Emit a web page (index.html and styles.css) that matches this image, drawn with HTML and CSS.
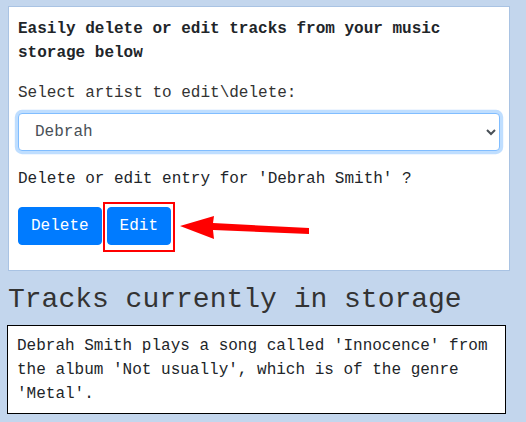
FILE: index.html
```html
<!DOCTYPE html>
<html lang="en">
<head>
<meta charset="utf-8">
<title>Music storage</title>
<link rel="stylesheet" href="styles.css">
</head>
<body>
<main class="page">
  <section class="card">
    <p class="intro">Easily delete or edit tracks from your music storage below</p>
    <div class="form-group">
      <label class="label" for="artist">Select artist to edit\delete:</label>
      <select id="artist" class="select">
        <option>Debrah</option>
      </select>
    </div>
    <p class="question">Delete or edit entry for 'Debrah Smith' ?</p>
    <div class="actions">
      <button class="btn">Delete</button>
      <button class="btn">Edit</button>
      <span class="highlight"></span>
      <svg class="arrow" width="140" height="36" viewBox="0 0 140 36" aria-hidden="true">
        <polygon points="5,16 39,6 38,13 134,18 134,24 38,20 39,29" fill="#f00"/>
      </svg>
    </div>
  </section>
  <h3 class="title">Tracks currently in storage</h3>
  <div class="tracks">
    <p class="track">Debrah Smith plays a song called 'Innocence' from the album 'Not usually', which is of the genre 'Metal'.</p>
  </div>
</main>
</body>
</html>
```

FILE: styles.css
```css
* { box-sizing: border-box; }

html, body {
  margin: 0;
  padding: 0;
  background: #c3d6ed;
}

body {
  font-family: "Liberation Mono", "Courier New", monospace;
  font-size: 16px;
  line-height: 1.5;
  color: #212529;
}

.page {
  padding: 6px 0 0 8px;
}

.card {
  width: 502px;
  background: #fff;
  border: 1px solid #a9c3e3;
  padding: 10px 9px 9px 9px;
}

.intro {
  margin: 0 0 16px;
  font-weight: bold;
}

.form-group {
  margin-bottom: 16px;
}

.label {
  display: block;
  margin-bottom: 8px;
  color: #333;
}

.select {
  display: block;
  width: 100%;
  height: 38px;
  padding: 6px 12px;
  font-family: inherit;
  font-size: 16px;
  color: #495057;
  background: #fff;
  border: 1px solid #80bdff;
  border-radius: 4px;
  box-shadow: 0 0 0 3.2px rgba(0, 123, 255, 0.25);
  outline: none;
}

.question {
  margin: 0 0 16px;
}

.actions {
  position: relative;
  display: flex;
  gap: 5px;
  margin-bottom: 16px;
}

.btn {
  font-family: inherit;
  font-size: 16px;
  line-height: 24px;
  padding: 6px 12px;
  color: #fff;
  background: #007bff;
  border: 1px solid #007bff;
  border-radius: 4px;
}

.highlight {
  position: absolute;
  left: 85px;
  top: -5px;
  width: 72px;
  height: 50px;
  border: 2px solid #f00;
}

.arrow {
  position: absolute;
  left: 157px;
  top: 3px;
}

.title {
  margin: 12px 0 8px;
  font-size: 28px;
  font-weight: normal;
  line-height: 1.2;
  color: #333;
}

.tracks {
  width: 499px;
  margin-left: -1px;
  background: #fff;
  border: 1px solid #000;
  padding: 8px 9px 7px;
}

.track {
  margin: 0;
}
```
